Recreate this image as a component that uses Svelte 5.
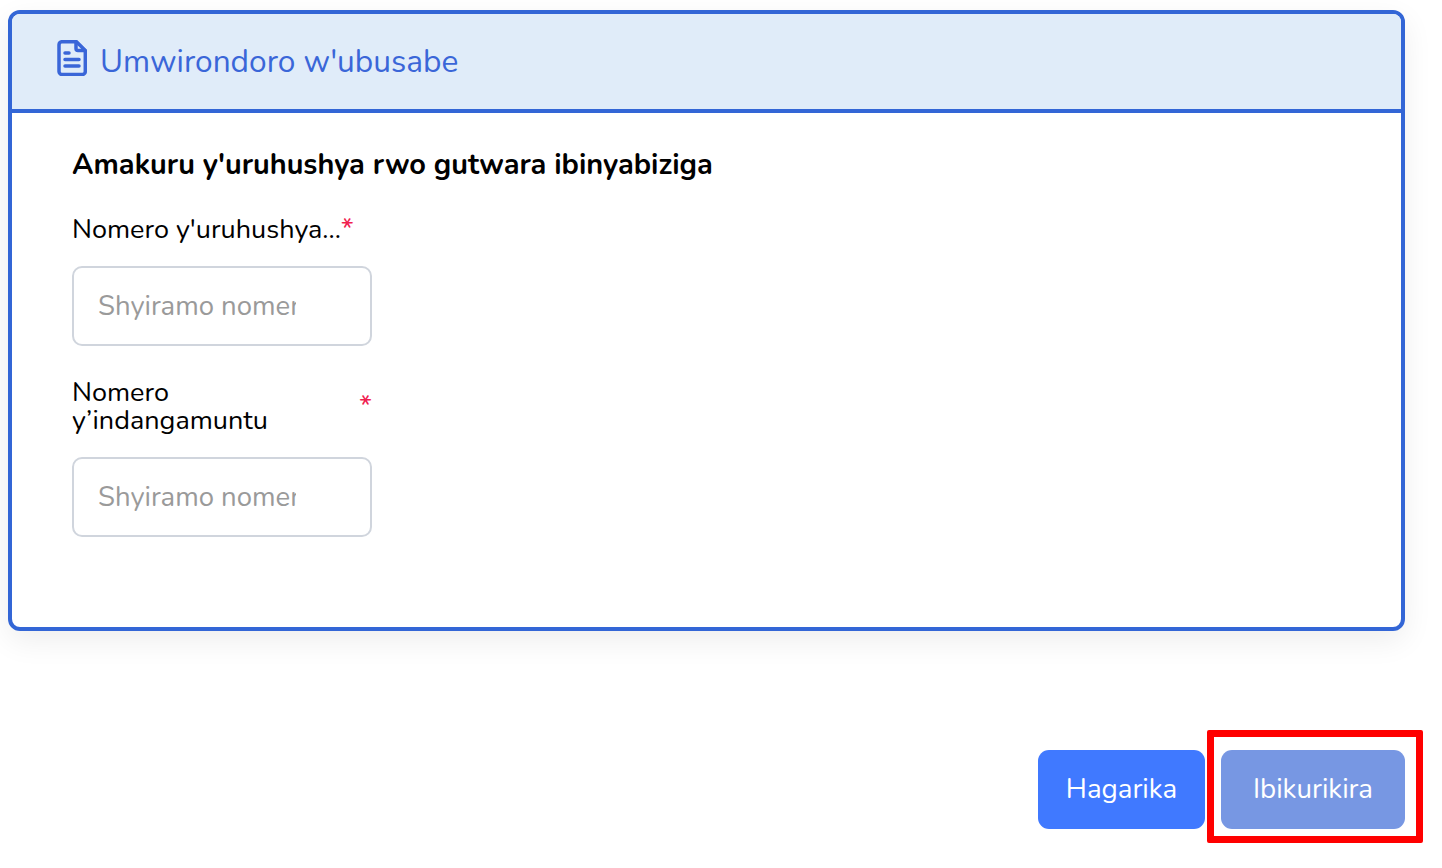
<script>
  const fields = [
    { id: 'licence', label: "Nomero y'uruhushya...", wrap: false },
    { id: 'identity', label: 'Nomero y’indangamuntu', wrap: true },
  ];
</script>

<div class="page">
  <section class="card">
    <header class="card-head">
      <svg class="doc-icon" viewBox="0 0 30 36" fill="none" stroke="currentColor" stroke-width="3.500" stroke-linejoin="round" stroke-linecap="round" aria-hidden="true">
        <path d="M5 1.700h14.500L28.300 10.500v21a3 3 0 0 1-3 3H5a3 3 0 0 1-3-3V4.700a3 3 0 0 1 3-3z" />
        <path d="M19 2v6.500a2 2 0 0 0 2 2h7" />
        <path d="M8 13h4M8 19.500h14M8 26h14" />
      </svg>
      <h1>Umwirondoro w'ubusabe</h1>
    </header>
    <div class="card-body">
      <h2>Amakuru y'uruhushya rwo gutwara ibinyabiziga</h2>
      {#each fields as field}
        <div class="field">
          <label for={field.id} class:wrap={field.wrap}>
            <span class="label-text">{field.label}</span><span class="req">*</span>
          </label>
          <input id={field.id} type="text" placeholder="Shyiramo nomero" />
        </div>
      {/each}
    </div>
  </section>

  <footer class="actions">
    <button class="btn cancel">Hagarika</button>
    <div class="highlight-wrap">
      <button class="btn next">Ibikurikira</button>
      <div class="highlight"></div>
    </div>
  </footer>
</div>

<style>
  :global(body) {
    margin: 0;
    background: #fff;
  }

  .page {
    box-sizing: border-box;
    width: 1442px;
    height: 868px;
    padding: 10px 37px 0 8px;
    font-family: "Nunito", "Open Sans", "Noto Sans", sans-serif;
    color: #000;
    overflow: hidden;
  }

  .card {
    box-sizing: border-box;
    height: 621px;
    border: 4px solid #3366d6;
    border-radius: 12px;
    box-shadow: 0 10px 30px rgba(0, 0, 0, 0.07);
    overflow: hidden;
    background: #fff;
  }

  .card-head {
    box-sizing: border-box;
    height: 99px;
    display: flex;
    align-items: center;
    gap: 13px;
    padding: 0 0 0 45px;
    background: #e0ecf9;
    border-bottom: 4px solid #3366d6;
    color: #3a66d8;
  }

  .doc-icon {
    width: 30px;
    height: 36px;
    margin-top: -8px;
  }

  h1 {
    margin: 0;
    font-size: 31.650px;
    font-weight: 400;
  }

  .card-body {
    padding: 35px 0 0 60px;
  }

  h2 {
    margin: 0 0 34px;
    font-size: 28.900px;
    line-height: 34px;
    font-weight: 700;
  }

  .field {
    width: 300px;
    margin-bottom: 33px;
  }

  label {
    display: flex;
    justify-content: flex-start;
    font-size: 27px;
    line-height: 28px;
    margin-bottom: 22px;
  }

  label.wrap .label-text {
    flex: 0 0 230px;
  }

  label.wrap {
    justify-content: space-between;
  }

  .req {
    color: #f0204f;
    font-size: 29px;
    line-height: 26px;
  }

  label.wrap .req {
    align-self: center;
    margin-top: -2px;
  }

  input {
    display: block;
    box-sizing: border-box;
    width: 300px;
    height: 80px;
    padding: 0 74px 0 24px;
    border: 2px solid #d0d5dd;
    border-radius: 10px;
    background: #fff;
    font-family: inherit;
    font-size: 27.500px;
    outline: none;
  }

  input::placeholder {
    color: #9a9a9a;
    opacity: 1;
  }

  .actions {
    display: flex;
    justify-content: flex-end;
    gap: 16px;
    margin-top: 119px;
  }

  .btn {
    display: block;
    height: 79px;
    border: none;
    border-radius: 11px;
    color: #fff;
    font-family: inherit;
    font-size: 27.700px;
    padding: 0 0 2px;
  }

  .cancel {
    width: 167px;
    background: #4079ff;
  }

  .next {
    width: 184px;
    background: #7797e3;
  }

  .highlight-wrap {
    position: relative;
  }

  .highlight {
    position: absolute;
    left: -14px;
    top: -20px;
    width: 216px;
    height: 113px;
    box-sizing: border-box;
    border: 7.500px solid #ff0000;
    border-radius: 2px;
    pointer-events: none;
  }
</style>
